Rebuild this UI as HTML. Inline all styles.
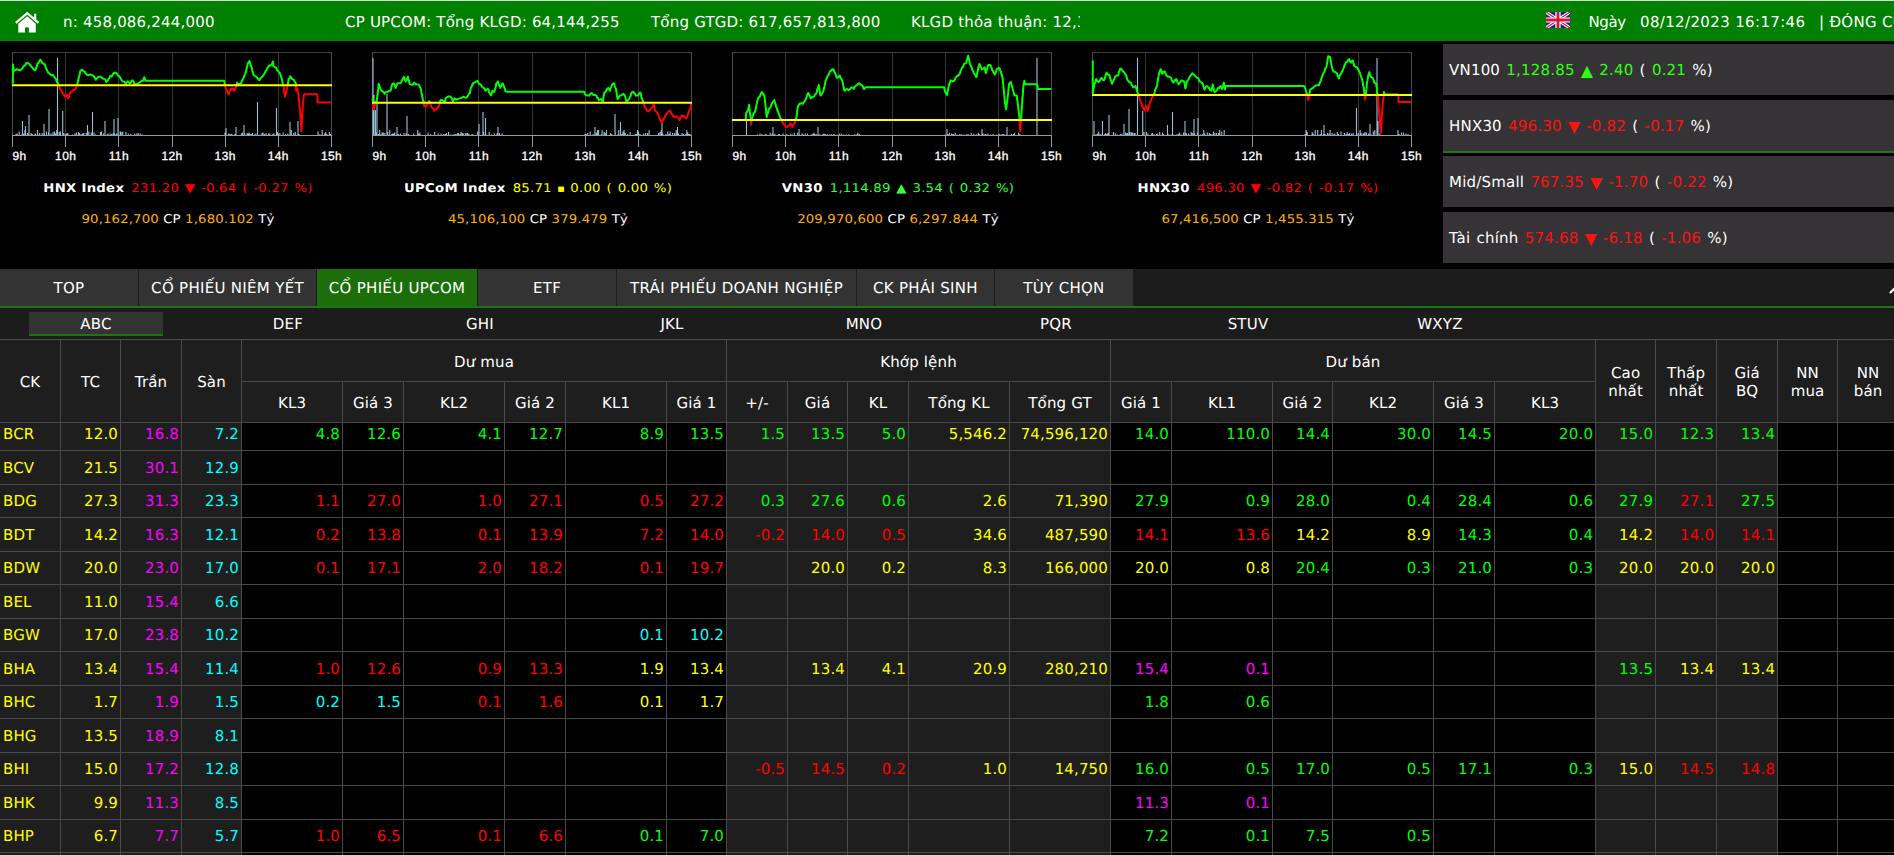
<!DOCTYPE html><html lang="vi"><head><meta charset="utf-8"><title>Bảng giá UPCOM</title><style>
*{box-sizing:border-box}
html,body{margin:0;padding:0;background:#000;overflow:hidden}
body{width:1894px;height:855px;position:relative;font-family:"DejaVu Sans", "Liberation Sans", sans-serif;font-size:15px;color:#fff;text-rendering:geometricPrecision}
#top{position:absolute;left:0;top:0;width:1894px;height:41px;background:#008000;border-top:1px solid #d9d9d9;overflow:hidden;white-space:nowrap}
#top span{position:absolute;top:10px;line-height:22px;height:22px;letter-spacing:.3px}
#mq{position:absolute;left:63px;top:0;width:1017px;height:40px;overflow:hidden}
#mq span{top:10px;letter-spacing:.2px}
.ch{position:absolute;top:0}
.al{font-family:"Liberation Sans",sans-serif;font-size:12px;fill:#fff;letter-spacing:.4px;stroke:#fff;stroke-width:.3px}
.ct1,.ct2{position:absolute;width:356px;text-align:center;font-size:12px;line-height:16px;white-space:nowrap;transform:scaleX(1.105);transform-origin:50% 50%}
.ct1{top:180px}.ct2{top:210.6px;letter-spacing:.13px}
.ct1 b{font-weight:bold;letter-spacing:.25px;margin-right:2.6px}
.ct1 span{letter-spacing:.2px;word-spacing:1.2px}
.ct1 i{font-style:normal;font-size:6.8px;letter-spacing:0;position:relative;top:-1.5px}
.or{color:#ffae0a}
.pn{position:absolute;left:1443px;width:451px;height:51px;background:#353335;padding-left:6px;line-height:53px;white-space:nowrap;letter-spacing:.2px;word-spacing:1.25px}
.pn i{font-style:normal;font-size:15.6px;line-height:0;letter-spacing:0;position:relative;top:.5px}
.pn.a{height:53px;border-bottom:2px solid #1a7a0c}
#tabs{position:absolute;left:0;top:269px;width:1894px;height:37px;background:#1c1c1c}
#tabs div{position:absolute;top:0;height:37px;line-height:39px;text-align:center;background:#333;white-space:nowrap;letter-spacing:.3px}
#tabs div.a{background:#1b6e0a}
#gl{position:absolute;left:0;top:306px;width:1894px;height:2px;background:#1a770c}
#sub{position:absolute;left:0;top:308px;width:1894px;height:31px;background:#1c1c1c}
#sub div{position:absolute;top:4px;width:134px;height:24px;line-height:25px;text-align:center;letter-spacing:.2px}
#sub div.a{background:#333;border-bottom:2px solid #1a770c;line-height:25px}
#tw{position:absolute;left:0;top:339px;width:1894px;height:516px;overflow:hidden}
table.pb{border-collapse:separate;border-spacing:0;table-layout:fixed;border-top:1px solid #4a4a4a}
.pb th{background:#1e1e1e;font-weight:normal;color:#fff;border-right:1px solid #4a4a4a;border-bottom:1px solid #4a4a4a;padding:2px 0 0 0;text-align:center;line-height:18px;letter-spacing:.15px}
.pb tr.h1 th{height:42px}
.pb tr.h2 th{height:41px}
.pb td{border-right:1px solid #4a4a4a;border-bottom:1px solid #4a4a4a;padding:0 2px 0 0;text-align:right;background:#000;white-space:nowrap;overflow:hidden;line-height:18px;letter-spacing:.15px}
.pb td.k{background:#1e1e1e}
.pb td.l{text-align:left;padding:0 0 0 3px}
.pb td .f{margin-top:-6px}
.y{color:#ffff00}.g{color:#00ff00}.r{color:#ff0000}.p{color:#ff00ff}.c{color:#00ffff}
</style></head><body>
<div id="top">
<svg style="position:absolute;left:14px;top:9px" width="26" height="24" viewBox="14 10 26 24"><path d="M15.8 22.9 L27.16 13.2 L38.5 22.9" fill="none" stroke="#fff" stroke-width="2.3"/><path d="M27.16 16.3 L35.8 23.7 V32.6 H28.9 V28.4 Q28.9 27.2 27.7 27.2 H26.2 Q25 27.2 25 28.4 V32.6 H18.3 V23.7 Z" fill="#fff"/><rect x="34.1" y="13.7" width="2.1" height="6" fill="#fff"/></svg>
<div id="mq"><span style="left:0">n: 458,086,244,000</span><span style="left:282px">CP UPCOM: Tổng KLGD: 64,144,255</span><span style="left:588px">Tổng GTGD: 617,657,813,800</span><span style="left:848px">KLGD thỏa thuận: 12,344,211</span></div>
<svg style="position:absolute;left:1546px;top:11px" width="24" height="16" viewBox="0 0 60 40"><rect width="60" height="40" fill="#1b2a7a"/><path d="M0 0L60 40M60 0L0 40" stroke="#fff" stroke-width="8"/><path d="M0 0L60 40M60 0L0 40" stroke="#d8143c" stroke-width="3"/><path d="M30 0V40M0 20H60" stroke="#fff" stroke-width="13"/><path d="M30 0V40M0 20H60" stroke="#d8143c" stroke-width="7"/></svg>
<span style="left:1588.5px;letter-spacing:-.4px">Ngày</span><span style="left:1640px;letter-spacing:.36px">08/12/2023 16:17:46</span><span style="left:1819px">| ĐÓNG CỬA</span>
</div>
<svg class="ch" style="left:0px" width="360" height="170" viewBox="0 0 360 170">
<line x1="12.5" y1="52.5" x2="12.5" y2="135" stroke="#4c4c4c" stroke-width="1"/>
<line x1="12.5" y1="135" x2="12.5" y2="147" stroke="#9a9a9a" stroke-width="1"/>
<line x1="65.5" y1="52.5" x2="65.5" y2="135" stroke="#363636" stroke-width="1"/>
<line x1="65.5" y1="135" x2="65.5" y2="147" stroke="#9a9a9a" stroke-width="1"/>
<line x1="118.5" y1="52.5" x2="118.5" y2="135" stroke="#363636" stroke-width="1"/>
<line x1="118.5" y1="135" x2="118.5" y2="147" stroke="#9a9a9a" stroke-width="1"/>
<line x1="172.5" y1="52.5" x2="172.5" y2="135" stroke="#363636" stroke-width="1"/>
<line x1="172.5" y1="135" x2="172.5" y2="147" stroke="#9a9a9a" stroke-width="1"/>
<line x1="225.5" y1="52.5" x2="225.5" y2="135" stroke="#363636" stroke-width="1"/>
<line x1="225.5" y1="135" x2="225.5" y2="147" stroke="#9a9a9a" stroke-width="1"/>
<line x1="278.5" y1="52.5" x2="278.5" y2="135" stroke="#363636" stroke-width="1"/>
<line x1="278.5" y1="135" x2="278.5" y2="147" stroke="#9a9a9a" stroke-width="1"/>
<line x1="331.5" y1="52.5" x2="331.5" y2="135" stroke="#4c4c4c" stroke-width="1"/>
<line x1="331.5" y1="135" x2="331.5" y2="147" stroke="#9a9a9a" stroke-width="1"/>
<line x1="12" y1="52.5" x2="332" y2="52.5" stroke="#404040" stroke-width="1"/>
<path d="M16.0 135.0V134.0M17.2 135.0V133.5M19.2 135.0V131.5M21.7 135.0V134.4M23.7 135.0V133.5M24.9 135.0V130.0M27.4 135.0V133.0M28.6 135.0V134.0M31.1 135.0V133.0M32.1 135.0V134.0M34.6 135.0V134.4M35.6 135.0V133.5M37.6 135.0V130.0M39.6 135.0V133.0M42.1 135.0V133.0M44.5 135.0V133.0M46.5 135.0V131.5M48.5 135.0V132.5M51.0 135.0V133.5M53.0 135.0V132.0M54.5 135.0V131.5M55.5 135.0V133.5M56.7 135.0V130.0M59.2 135.0V132.0M60.4 135.0V131.5M62.9 135.0V133.5M63.9 135.0V133.0M65.9 135.0V134.0M66.9 135.0V133.0M67.9 135.0V133.5M72.4 135.0V134.4M74.9 135.0V133.5M76.4 135.0V132.5M78.4 135.0V132.0M79.6 135.0V133.0M81.1 135.0V134.0M82.6 135.0V133.5M83.8 135.0V133.0M86.3 135.0V133.0M88.8 135.0V131.5M91.3 135.0V132.5M92.5 135.0V133.5M94.0 135.0V132.5M95.5 135.0V134.4M100.5 135.0V132.0M101.5 135.0V131.5M103.5 135.0V133.5M105.0 135.0V132.0M107.0 135.0V134.4M108.0 135.0V133.5M110.0 135.0V133.5M111.5 135.0V134.0M113.0 135.0V133.5M114.5 135.0V133.5M115.5 135.0V134.4M116.7 135.0V133.5M118.2 135.0V134.0M120.2 135.0V131.5M121.2 135.0V132.0M122.7 135.0V131.5M125.9 135.0V132.0M128.3 135.0V133.5M130.8 135.0V134.0M134.8 135.0V133.5M136.8 135.0V133.5M138.3 135.0V133.0M140.3 135.0V133.5M142.3 135.0V134.4M225.0 135.0V132.5M226.2 135.0V134.4M228.7 135.0V133.5M229.9 135.0V134.0M231.4 135.0V134.0M232.4 135.0V134.4M234.9 135.0V134.0M241.4 135.0V133.5M242.4 135.0V132.5M244.6 135.0V133.5M247.1 135.0V133.0M248.1 135.0V133.5M249.1 135.0V132.5M250.1 135.0V134.0M251.6 135.0V134.0M252.6 135.0V133.0M254.6 135.0V134.4M255.8 135.0V133.5M259.8 135.0V134.4M262.0 135.0V133.0M263.0 135.0V132.5M264.5 135.0V134.0M266.0 135.0V133.0M268.5 135.0V133.5M269.7 135.0V133.5M272.9 135.0V134.0M273.9 135.0V133.5M276.4 135.0V133.0M277.4 135.0V132.0M278.4 135.0V133.5M279.9 135.0V133.0M283.1 135.0V132.5M285.6 135.0V134.0M287.8 135.0V133.5M291.3 135.0V130.0M293.8 135.0V133.0M295.3 135.0V132.0M299.0 135.0V134.0M318.0 135.0V131.5M319.2 135.0V134.4M320.2 135.0V134.4M322.2 135.0V130.0M324.7 135.0V133.5M325.7 135.0V132.0M326.9 135.0V134.0M329.4 135.0V132.0M330.4 135.0V134.0M57.5 135.0V58.0M49.0 135.0V109.0M62.7 135.0V111.0M92.5 135.0V112.0M29.0 135.0V115.0M22.5 135.0V121.0M25.5 135.0V126.0M105.0 135.0V121.0M114.0 135.0V119.0M118.0 135.0V118.0M44.0 135.0V124.0M87.5 135.0V125.0M257.5 135.0V102.0M276.5 135.0V108.0M244.0 135.0V125.0M290.0 135.0V122.0M298.0 135.0V121.0M236.0 135.0V127.0M226.0 135.0V128.0" stroke="#a5d3ef" stroke-width="1.1" fill="none" opacity=".92"/>
<line x1="12" y1="135.5" x2="332" y2="135.5" stroke="#9a9a9a" stroke-width="1"/>
<polyline points="12.8,83.8 12.8,82.2 12.8,81.2 12.9,80.1 12.9,77.4 12.9,76.5 12.9,75.7 13.0,73.5 13.0,72.7 13.0,70.2 13.0,68.4 13.1,68.2 13.1,66.6 13.1,64.5 13.3,66.9 13.5,67.5 13.7,69.4 13.9,70.9 15.4,70.2 16.9,69.2 19.2,70.3 20.4,70.3 21.5,69.1 22.7,68.0 23.6,66.2 24.5,65.5 25.3,65.2 26.2,63.3 27.7,63.0 29.1,63.9 30.1,65.0 31.1,66.2 32.1,67.4 33.5,69.2 35.0,70.3 35.6,69.7 36.2,67.7 36.7,66.8 37.3,64.0 37.9,63.3 38.8,62.6 39.6,60.3 40.5,59.8 41.5,61.6 42.6,63.3 44.9,64.5 45.5,66.9 46.1,68.3 46.7,69.4 47.3,70.9 48.2,72.6 49.2,73.5 50.2,74.4 51.7,75.3 53.1,75.0 54.1,76.5 55.1,77.9 56.0,79.1 56.6,81.3 57.2,82.5 57.8,82.9 58.4,84.6" fill="none" stroke="#00ff00" stroke-width="2" stroke-linejoin="round"/>
<polyline points="58.4,84.6 59.0,86.1 59.7,87.2 60.4,89.6 61.2,90.0 61.9,92.0 62.9,93.6 63.8,94.6 64.8,96.6 65.7,95.4 66.6,94.3 67.1,96.3 67.6,96.9 68.1,98.4 68.6,97.4 69.1,96.1 69.6,93.9 70.1,93.1 71.5,91.8 73.0,90.2 74.5,89.8 75.9,87.9 76.5,86.7 77.1,84.9" fill="none" stroke="#ff0000" stroke-width="2" stroke-linejoin="round"/>
<polyline points="77.1,84.9 77.7,82.6 78.0,80.2 78.3,80.5 78.7,77.3 79.0,77.4 79.4,75.6 79.7,74.3 80.0,72.1 81.2,70.1 82.4,69.7 83.5,71.3 84.7,71.5 85.5,73.4 86.3,74.1 87.0,75.0 88.8,75.2 90.5,74.4 92.9,75.6 93.9,76.2 94.8,77.8 95.8,79.7 97.3,77.8 98.7,76.8 101.1,76.8 102.2,78.2 103.4,78.8 104.6,79.1 105.5,79.9 106.3,82.0 107.3,80.9 108.3,79.6 109.3,77.9 110.4,75.9 111.6,76.4 112.8,74.4 113.9,72.9 115.1,72.7 116.6,73.3 118.0,75.6 119.0,76.2 120.0,77.2 121.0,79.1 122.1,80.8 123.3,81.4 124.5,81.9 125.6,83.8 126.8,82.2 128.0,81.4 129.2,83.0 130.3,83.2 131.5,80.9 132.7,80.3 133.4,81.5 134.2,83.4 135.0,84.3 137.3,84.3 138.8,82.9 140.3,82.0 141.7,80.6 143.2,80.8 143.8,78.8 144.3,77.3 144.9,78.9 145.5,80.8 146.9,80.8 148.4,80.8 149.8,80.8 151.2,80.8 152.6,80.8 154.0,80.8 155.5,80.8 156.9,80.8 158.3,80.8 159.7,80.8 161.2,80.8 162.6,80.8 164.0,80.8 165.4,80.8 166.8,80.8 168.2,80.8 169.6,80.8 171.0,80.8 172.4,80.8 173.8,80.8 175.2,80.8 176.6,80.8 178.0,80.8 179.4,80.8 180.8,80.8 182.2,80.8 183.6,80.8 185.0,80.8 186.4,80.8 187.8,80.8 189.2,80.8 190.6,80.8 192.0,80.8 193.4,80.8 194.8,80.8 196.2,80.8 197.6,80.8 199.0,80.8 200.4,80.8 201.8,80.8 203.2,80.8 204.6,80.8 206.0,80.8 207.4,80.8 208.8,80.8 210.2,80.8 211.6,80.8 213.0,80.8 214.4,80.8 215.8,80.8 217.2,80.8 218.6,80.8 220.0,80.8 221.4,80.8 222.8,80.8 224.2,80.8 224.5,82.1 224.8,84.9" fill="none" stroke="#00ff00" stroke-width="2" stroke-linejoin="round"/>
<polyline points="224.8,84.9 225.4,86.7 226.0,88.6 226.6,90.3 227.2,91.5 227.7,93.1 228.9,94.3 229.5,91.9 230.1,90.5 230.7,89.0 233.0,88.4 234.2,90.8 235.1,89.7 235.9,87.3 237.1,84.9" fill="none" stroke="#ff0000" stroke-width="2" stroke-linejoin="round"/>
<polyline points="237.1,84.9 237.1,82.6 238.8,84.3 241.2,83.2 241.8,81.1 242.4,80.4 242.9,79.1 243.5,77.9 244.1,76.5 244.7,74.5 245.3,73.6 245.9,72.1 246.2,70.8 246.6,69.1 246.9,66.9 247.3,65.4 247.6,63.9 248.5,62.7 249.4,61.0 250.0,62.8 250.5,64.9 251.1,65.6 251.5,67.8 251.9,68.0 252.3,71.1 252.7,71.6 253.1,73.6 253.5,75.0 254.9,75.9 256.4,76.8 257.4,78.2 258.3,79.1 259.3,80.3 260.3,78.3 261.3,77.5 262.2,76.8 263.1,75.7 264.0,74.3 264.9,72.6 265.8,70.9 266.6,70.0 267.5,67.6 268.4,66.7 269.3,65.6 270.7,65.5 272.2,63.9 272.8,61.5 273.0,63.0 273.2,64.0 273.4,66.2 274.8,67.2 276.3,68.0 277.2,70.1 278.0,70.9 278.9,72.2 279.8,73.2 280.3,74.5 280.7,75.7 281.2,76.9 281.7,78.8 282.1,80.3 282.5,82.3 282.9,83.7 283.3,84.9" fill="none" stroke="#00ff00" stroke-width="2" stroke-linejoin="round"/>
<polyline points="283.3,84.9 283.5,85.8 283.7,87.5 283.9,89.6 284.1,91.1 284.3,92.6 284.6,93.6 284.8,94.5 285.1,96.6 285.6,94.5 286.2,93.1 286.5,90.9 286.7,89.7 286.9,88.9 287.2,87.1 287.4,86.1 287.7,84.9" fill="none" stroke="#ff0000" stroke-width="2" stroke-linejoin="round"/>
<polyline points="287.7,84.9 287.9,83.8 288.1,82.0 288.4,81.2 288.6,79.1 289.4,78.4 290.3,76.2 291.2,77.5 292.1,79.1 293.8,79.7 294.7,81.7 295.6,82.6 295.9,84.9" fill="none" stroke="#00ff00" stroke-width="2" stroke-linejoin="round"/>
<polyline points="295.9,84.9 296.0,85.6 296.0,87.9 296.1,90.2 296.2,90.8 297.3,88.4 297.6,89.2 297.8,91.4 298.0,93.0 298.3,94.2 298.5,95.5 298.6,97.6 298.8,97.6 298.9,100.1 299.0,101.3 299.2,103.0 299.3,103.9 299.4,106.4 299.6,106.3 299.7,108.6 299.9,110.5 300.0,111.8 300.1,112.8 300.3,114.2 300.4,115.0 300.5,116.4 300.6,119.1 300.6,119.6 300.7,120.9 300.8,123.3 300.9,124.0 301.0,125.3 301.1,127.5 301.2,128.0 301.3,130.4 301.4,131.1 301.5,129.4 301.6,128.3 301.6,126.9 301.7,125.8 301.8,124.7 301.9,122.9 301.9,120.3 302.0,119.2 302.1,118.5 302.2,116.2 302.2,115.9 302.3,113.6 302.4,112.0 302.5,111.4 302.5,109.2 302.6,108.3 302.7,107.4 302.9,105.0 303.0,104.6 303.1,103.4 303.2,102.0 303.4,99.1 303.5,97.9 303.6,97.2 303.8,95.5 304.4,94.3 305.8,94.3 307.2,94.3 308.6,94.3 310.1,94.3 311.5,94.3 312.9,94.3 314.4,94.3 315.8,94.3 317.2,94.3 317.3,95.3 317.5,97.5 317.6,98.5 317.7,101.6 317.8,102.5 319.3,102.5 320.8,102.5 322.3,102.5 323.8,102.5 325.3,102.5 326.8,102.5 328.3,102.5 329.8,102.5 331.2,102.5" fill="none" stroke="#ff0000" stroke-width="2" stroke-linejoin="round"/>
<line x1="12" y1="85.2" x2="332" y2="85.2" stroke="#ffff00" stroke-width="2"/>
<text x="12.5" y="159.9" class="al" text-anchor="start">9h</text>
<text x="65.7" y="159.9" class="al" text-anchor="middle">10h</text>
<text x="118.8" y="159.9" class="al" text-anchor="middle">11h</text>
<text x="172.0" y="159.9" class="al" text-anchor="middle">12h</text>
<text x="225.2" y="159.9" class="al" text-anchor="middle">13h</text>
<text x="278.3" y="159.9" class="al" text-anchor="middle">14h</text>
<text x="331.5" y="159.9" class="al" text-anchor="middle">15h</text>
</svg>
<div class="ct1" style="left:0px"><b>HNX Index</b> <span style="color:#ff0000">231.20 ▼ -0.64 ( -0.27 %)</span></div>
<div class="ct2" style="left:0px"><span class="or">90,162,700</span> CP <span class="or">1,680.102</span> Tỷ</div>
<svg class="ch" style="left:360px" width="360" height="170" viewBox="0 0 360 170">
<line x1="12.5" y1="52.5" x2="12.5" y2="135" stroke="#4c4c4c" stroke-width="1"/>
<line x1="12.5" y1="135" x2="12.5" y2="147" stroke="#9a9a9a" stroke-width="1"/>
<line x1="65.5" y1="52.5" x2="65.5" y2="135" stroke="#363636" stroke-width="1"/>
<line x1="65.5" y1="135" x2="65.5" y2="147" stroke="#9a9a9a" stroke-width="1"/>
<line x1="118.5" y1="52.5" x2="118.5" y2="135" stroke="#363636" stroke-width="1"/>
<line x1="118.5" y1="135" x2="118.5" y2="147" stroke="#9a9a9a" stroke-width="1"/>
<line x1="172.5" y1="52.5" x2="172.5" y2="135" stroke="#363636" stroke-width="1"/>
<line x1="172.5" y1="135" x2="172.5" y2="147" stroke="#9a9a9a" stroke-width="1"/>
<line x1="225.5" y1="52.5" x2="225.5" y2="135" stroke="#363636" stroke-width="1"/>
<line x1="225.5" y1="135" x2="225.5" y2="147" stroke="#9a9a9a" stroke-width="1"/>
<line x1="278.5" y1="52.5" x2="278.5" y2="135" stroke="#363636" stroke-width="1"/>
<line x1="278.5" y1="135" x2="278.5" y2="147" stroke="#9a9a9a" stroke-width="1"/>
<line x1="331.5" y1="52.5" x2="331.5" y2="135" stroke="#4c4c4c" stroke-width="1"/>
<line x1="331.5" y1="135" x2="331.5" y2="147" stroke="#9a9a9a" stroke-width="1"/>
<line x1="12" y1="52.5" x2="332" y2="52.5" stroke="#404040" stroke-width="1"/>
<path d="M13.0 135.0V134.0M15.5 135.0V134.0M16.5 135.0V132.5M18.5 135.0V134.0M19.7 135.0V130.0M20.9 135.0V134.4M22.1 135.0V132.5M23.3 135.0V132.5M24.8 135.0V133.0M27.8 135.0V132.0M29.8 135.0V130.0M31.8 135.0V134.0M32.8 135.0V133.5M33.8 135.0V133.5M34.8 135.0V132.5M37.3 135.0V134.0M38.5 135.0V134.0M40.5 135.0V133.5M44.0 135.0V133.0M46.0 135.0V133.5M48.5 135.0V134.0M53.7 135.0V133.5M57.7 135.0V130.0M58.7 135.0V133.5M59.9 135.0V132.5M68.1 135.0V132.5M70.6 135.0V134.0M74.6 135.0V132.0M78.1 135.0V133.5M81.1 135.0V133.5M83.8 135.0V134.0M85.3 135.0V134.0M86.5 135.0V133.0M88.5 135.0V132.0M91.0 135.0V134.4M93.0 135.0V134.4M94.2 135.0V134.4M95.2 135.0V134.0M96.4 135.0V134.4M97.4 135.0V133.0M98.4 135.0V133.0M99.9 135.0V134.0M101.1 135.0V132.0M102.3 135.0V133.0M103.3 135.0V133.5M105.3 135.0V133.0M106.8 135.0V133.0M107.8 135.0V133.0M109.0 135.0V134.0M111.5 135.0V134.4M112.7 135.0V134.0M117.7 135.0V131.5M123.7 135.0V132.0M126.2 135.0V134.4M129.2 135.0V132.0M131.7 135.0V134.4M134.4 135.0V133.5M136.9 135.0V133.5M137.9 135.0V133.0M139.4 135.0V133.0M142.1 135.0V133.5M225.0 135.0V134.0M226.2 135.0V134.0M227.7 135.0V133.0M230.2 135.0V131.5M233.2 135.0V134.0M235.2 135.0V134.0M236.4 135.0V132.5M237.6 135.0V130.0M238.6 135.0V130.0M241.1 135.0V134.4M242.1 135.0V130.0M244.1 135.0V132.0M245.3 135.0V133.0M246.5 135.0V130.0M250.5 135.0V133.0M251.7 135.0V134.0M255.2 135.0V132.5M257.7 135.0V134.4M258.7 135.0V130.0M261.9 135.0V134.0M262.9 135.0V131.5M264.1 135.0V130.0M265.3 135.0V133.0M267.7 135.0V134.0M270.2 135.0V132.0M275.2 135.0V134.0M276.4 135.0V134.0M277.4 135.0V130.0M278.6 135.0V131.5M280.1 135.0V134.0M283.6 135.0V133.5M285.6 135.0V133.0M287.6 135.0V133.0M289.1 135.0V130.0M298.6 135.0V133.0M300.1 135.0V132.0M301.3 135.0V130.0M302.8 135.0V133.5M305.8 135.0V134.0M307.8 135.0V131.5M309.0 135.0V134.0M310.2 135.0V131.5M312.7 135.0V133.0M314.7 135.0V133.0M316.2 135.0V130.0M317.4 135.0V132.0M318.6 135.0V133.5M322.1 135.0V133.0M323.6 135.0V134.0M325.8 135.0V134.0M326.8 135.0V130.0M327.8 135.0V132.5M329.0 135.0V134.0M330.0 135.0V134.0M13.0 135.0V58.0M14.0 135.0V95.0M15.5 135.0V110.0M17.0 135.0V97.0M27.0 135.0V94.0M47.0 135.0V116.0M37.0 135.0V127.0M123.0 135.0V112.0M125.5 135.0V118.0M119.0 135.0V124.0M138.0 135.0V127.0M255.0 135.0V114.0M260.5 135.0V122.0M302.0 135.0V123.0M317.5 135.0V127.0M235.0 135.0V127.0" stroke="#a5d3ef" stroke-width="1.1" fill="none" opacity=".92"/>
<line x1="12" y1="135.5" x2="332" y2="135.5" stroke="#9a9a9a" stroke-width="1"/>
<polyline points="12.8,97.8 12.8,98.5 12.8,101.2 12.8,102.5" fill="none" stroke="#00ff00" stroke-width="2" stroke-linejoin="round"/>
<polyline points="12.8,102.5 12.9,103.1 13.0,104.6 13.1,105.9 13.2,108.7 13.4,109.5 13.9,108.0 14.5,106.0 15.1,104.8 15.7,102.5" fill="none" stroke="#ff0000" stroke-width="2" stroke-linejoin="round"/>
<polyline points="15.7,102.5 16.9,100.1 17.1,99.0 17.3,96.1 17.5,95.3 17.7,94.1 17.8,91.6 18.0,90.8 18.2,89.2 18.3,88.1 18.4,86.0 18.5,85.5 18.6,83.8 19.2,85.4 19.8,87.1 20.4,88.7 21.0,89.6 22.1,91.3 23.3,91.5 24.5,93.7 25.9,92.2 27.4,92.0 28.9,90.9 30.3,90.8 30.8,90.0 31.2,88.3 31.6,86.4 32.1,84.3 33.8,83.2 34.4,84.2 35.0,86.2 35.6,87.9 36.4,85.5 37.1,84.0 37.9,83.2 40.3,83.2 41.1,82.3 42.0,80.3 42.9,78.8 43.8,76.8 44.4,77.8 44.9,79.8 45.5,81.4 46.3,80.5 47.1,78.8 47.9,76.8 48.2,78.4 48.6,80.3 48.9,80.4 49.3,82.9 49.6,83.8 51.9,84.9 53.1,84.3 54.3,82.6 55.5,84.3 56.6,84.3 59.0,84.9 59.9,86.7 60.7,88.4 61.0,89.5 61.3,91.7 61.6,93.5 61.9,94.1 62.2,96.4 62.5,97.8 62.9,100.2 63.3,100.5 63.6,102.5" fill="none" stroke="#00ff00" stroke-width="2" stroke-linejoin="round"/>
<polyline points="63.6,102.5 63.9,103.6 64.2,106.0 66.0,106.6 66.9,105.5 67.7,103.7 68.9,102.5" fill="none" stroke="#ff0000" stroke-width="2" stroke-linejoin="round"/>
<polyline points="68.9,102.5 69.3,101.1 69.7,102.5" fill="none" stroke="#00ff00" stroke-width="2" stroke-linejoin="round"/>
<polyline points="69.7,102.5 70.1,103.7 70.7,104.9 71.3,106.3 71.8,107.7 73.0,108.3 74.2,110.7 75.6,109.2 77.1,108.9 78.0,107.0 78.9,106.6 79.3,104.9 79.8,102.5" fill="none" stroke="#ff0000" stroke-width="2" stroke-linejoin="round"/>
<polyline points="79.8,102.5 80.6,100.1 82.4,100.1 83.5,101.2 84.7,102.5 85.1,101.7 85.5,99.2 85.9,97.8 88.2,96.6 90.6,96.6 91.3,97.9 92.1,99.1 92.9,101.3 93.8,99.7 94.6,98.4 96.4,99.6 98.2,98.8 99.9,98.4 101.7,97.8 103.4,96.6 105.8,97.8 106.9,97.2 108.1,95.5 109.0,93.7 109.9,93.1 110.1,90.9 110.4,90.5 110.7,88.3 111.0,87.3 111.8,86.4 112.6,84.2 113.4,83.2 115.7,82.0 117.4,80.8 118.3,82.6 119.2,83.8 120.7,84.4 122.1,86.7 123.3,87.6 124.5,88.7 125.6,90.8 126.8,89.4 128.0,89.0 128.6,90.0 129.1,92.1 129.7,93.7 130.3,94.0 130.9,95.5 131.5,94.0 132.1,91.8 132.6,90.8 134.4,92.0 134.8,89.8 135.1,89.3 135.5,87.8 135.8,86.3 136.2,83.8 137.0,82.7 137.9,81.4 138.5,83.4 139.1,85.0 139.7,86.2 140.3,87.9 141.0,86.6 141.8,85.2 142.6,83.2 143.2,84.9 143.8,85.7 144.4,87.9 144.9,89.1 145.5,91.4 146.7,91.7 148.1,91.7 149.6,91.7 151.0,91.7 152.5,91.7 153.9,91.7 155.3,91.7 156.8,91.7 158.2,91.7 159.7,91.7 161.1,91.7 162.6,91.7 164.0,91.7 165.4,91.7 166.8,91.7 168.2,91.7 169.6,91.7 171.0,91.7 172.4,91.7 173.8,91.7 175.2,91.7 176.6,91.7 178.0,91.7 179.4,91.7 180.8,91.7 182.2,91.7 183.6,91.7 185.0,91.7 186.4,91.7 187.8,91.7 189.2,91.7 190.6,91.7 192.0,91.7 193.4,91.7 194.8,91.7 196.2,91.7 197.6,91.7 199.0,91.7 200.4,91.7 201.8,91.7 203.2,91.7 204.6,91.7 206.0,91.7 207.4,91.7 208.8,91.7 210.2,91.7 211.6,91.7 213.0,91.7 214.4,91.7 215.8,91.7 217.2,91.7 218.6,91.7 220.0,91.7 221.4,91.7 222.8,91.7 224.2,91.7 224.8,93.7 225.4,94.9 227.5,95.5 229.5,95.5 230.7,93.5 231.8,93.1 233.0,94.8 234.2,94.9 236.5,95.5 237.3,97.8 238.1,98.0 238.9,100.1 241.2,99.0 242.1,100.6 243.0,101.9 243.1,99.7 243.3,99.2 243.5,97.1 243.7,95.8 243.9,95.4 244.1,93.1 245.9,91.4 246.6,89.3 247.4,89.4 248.2,87.9 249.1,88.9 250.0,90.8 250.5,88.4 251.1,87.8 251.7,85.3 252.3,84.3 254.1,83.2 254.6,85.7 255.2,87.5 255.8,88.4 256.1,89.6 256.3,91.3 256.6,92.5 256.8,95.2 257.1,96.8 257.3,97.2 257.6,99.0 258.4,97.9 259.1,96.7 259.9,95.5 261.7,95.2 263.4,93.7 264.3,94.8 265.2,96.6 265.6,98.6 266.0,99.3 266.3,101.3 267.8,100.3 269.3,99.0 269.8,97.2 270.4,96.5 271.0,94.2 271.6,92.5 273.4,92.0 274.1,93.2 274.9,93.7 275.7,95.5 278.0,95.5 279.2,93.4 280.4,92.5 280.8,94.3 281.2,96.3 281.7,97.9 282.1,99.0 282.7,100.6 283.3,102.5" fill="none" stroke="#00ff00" stroke-width="2" stroke-linejoin="round"/>
<polyline points="283.3,102.5 283.9,104.9 284.5,106.0 285.2,107.8 286.0,108.7 286.8,110.7 288.3,111.1 289.7,110.1 290.9,109.1 292.1,107.2 292.9,105.8 293.8,104.2 294.1,105.1 294.4,106.9 294.7,109.8 295.0,110.7 296.2,111.6 297.3,113.0 297.9,113.6 298.5,115.6 299.1,117.1 299.7,118.8 300.5,120.5 301.4,122.4 302.2,121.8 303.0,120.0 303.8,118.8 304.5,118.1 305.2,115.4 306.0,115.3 306.7,113.0 308.2,111.8 309.6,110.7 310.4,111.1 311.2,112.9 312.0,114.2 313.1,116.0 314.3,117.1 315.8,116.5 317.2,116.5 318.0,117.9 318.8,118.3 319.6,120.0 320.3,118.1 321.1,117.2 321.9,115.3 324.2,116.5 325.4,118.1 326.6,118.3 327.0,116.5 327.5,115.9 328.0,114.2 328.4,113.2 328.9,111.2 329.8,109.4 330.7,108.9 330.8,106.3 330.9,104.8 331.0,103.7" fill="none" stroke="#ff0000" stroke-width="2" stroke-linejoin="round"/>
<line x1="12" y1="102.7" x2="332" y2="102.7" stroke="#ffff00" stroke-width="2"/>
<text x="12.5" y="159.9" class="al" text-anchor="start">9h</text>
<text x="65.7" y="159.9" class="al" text-anchor="middle">10h</text>
<text x="118.8" y="159.9" class="al" text-anchor="middle">11h</text>
<text x="172.0" y="159.9" class="al" text-anchor="middle">12h</text>
<text x="225.2" y="159.9" class="al" text-anchor="middle">13h</text>
<text x="278.3" y="159.9" class="al" text-anchor="middle">14h</text>
<text x="331.5" y="159.9" class="al" text-anchor="middle">15h</text>
</svg>
<div class="ct1" style="left:360px"><b>UPCoM Index</b> <span style="color:#ffff00">85.71 <i>■</i> 0.00 ( 0.00 %)</span></div>
<div class="ct2" style="left:360px"><span class="or">45,106,100</span> CP <span class="or">379.479</span> Tỷ</div>
<svg class="ch" style="left:720px" width="360" height="170" viewBox="0 0 360 170">
<line x1="12.5" y1="52.5" x2="12.5" y2="135" stroke="#4c4c4c" stroke-width="1"/>
<line x1="12.5" y1="135" x2="12.5" y2="147" stroke="#9a9a9a" stroke-width="1"/>
<line x1="65.5" y1="52.5" x2="65.5" y2="135" stroke="#363636" stroke-width="1"/>
<line x1="65.5" y1="135" x2="65.5" y2="147" stroke="#9a9a9a" stroke-width="1"/>
<line x1="118.5" y1="52.5" x2="118.5" y2="135" stroke="#363636" stroke-width="1"/>
<line x1="118.5" y1="135" x2="118.5" y2="147" stroke="#9a9a9a" stroke-width="1"/>
<line x1="172.5" y1="52.5" x2="172.5" y2="135" stroke="#363636" stroke-width="1"/>
<line x1="172.5" y1="135" x2="172.5" y2="147" stroke="#9a9a9a" stroke-width="1"/>
<line x1="225.5" y1="52.5" x2="225.5" y2="135" stroke="#363636" stroke-width="1"/>
<line x1="225.5" y1="135" x2="225.5" y2="147" stroke="#9a9a9a" stroke-width="1"/>
<line x1="278.5" y1="52.5" x2="278.5" y2="135" stroke="#363636" stroke-width="1"/>
<line x1="278.5" y1="135" x2="278.5" y2="147" stroke="#9a9a9a" stroke-width="1"/>
<line x1="331.5" y1="52.5" x2="331.5" y2="135" stroke="#4c4c4c" stroke-width="1"/>
<line x1="331.5" y1="135" x2="331.5" y2="147" stroke="#9a9a9a" stroke-width="1"/>
<line x1="12" y1="52.5" x2="332" y2="52.5" stroke="#404040" stroke-width="1"/>
<path d="M37.5 135.0V134.6M40.0 135.0V133.4M42.0 135.0V134.1M45.2 135.0V133.7M46.7 135.0V134.3M50.2 135.0V132.8M52.2 135.0V133.4M53.4 135.0V134.6M54.9 135.0V133.7M58.4 135.0V133.9M59.4 135.0V134.1M63.1 135.0V133.4M66.8 135.0V133.9M70.8 135.0V133.7M72.3 135.0V134.6M74.3 135.0V132.8M77.5 135.0V132.8M79.5 135.0V134.6M82.0 135.0V133.4M83.2 135.0V134.6M85.2 135.0V133.4M87.4 135.0V133.4M91.4 135.0V134.6M92.9 135.0V133.7M93.9 135.0V132.8M94.9 135.0V134.1M96.4 135.0V134.3M98.8 135.0V134.6M100.0 135.0V134.6M103.0 135.0V133.9M104.0 135.0V133.4M105.2 135.0V134.1M107.2 135.0V133.9M109.2 135.0V134.6M111.2 135.0V133.9M113.7 135.0V134.1M114.7 135.0V134.6M117.2 135.0V134.6M119.7 135.0V133.4M121.7 135.0V133.7M123.7 135.0V134.6M126.2 135.0V134.6M128.7 135.0V134.3M134.7 135.0V134.3M136.9 135.0V134.3M137.9 135.0V132.8M139.4 135.0V133.9M225.0 135.0V134.6M227.0 135.0V133.4M228.0 135.0V133.9M229.5 135.0V132.8M231.5 135.0V133.4M232.7 135.0V134.1M233.7 135.0V134.3M235.2 135.0V132.8M237.2 135.0V134.6M239.7 135.0V133.9M240.9 135.0V134.6M242.1 135.0V134.6M244.1 135.0V134.6M246.6 135.0V134.3M248.1 135.0V134.1M251.3 135.0V132.8M253.8 135.0V133.7M256.3 135.0V134.3M258.3 135.0V132.8M259.3 135.0V133.9M261.8 135.0V134.6M263.0 135.0V133.4M265.0 135.0V134.1M266.0 135.0V133.9M268.0 135.0V133.4M270.5 135.0V134.6M273.0 135.0V134.1M276.5 135.0V134.6M279.0 135.0V133.4M280.2 135.0V134.6M281.7 135.0V134.6M282.9 135.0V133.9M283.9 135.0V134.3M286.4 135.0V134.6M291.6 135.0V133.7M293.6 135.0V134.1M294.6 135.0V132.8M298.6 135.0V132.8M299.8 135.0V134.1M26.5 135.0V120.0M317.0 135.0V58.0M53.0 135.0V127.0M98.0 135.0V127.0M79.0 135.0V129.0M227.0 135.0V129.0M262.0 135.0V129.0M287.0 135.0V127.0" stroke="#a5d3ef" stroke-width="1.1" fill="none" opacity=".92"/>
<line x1="12" y1="135.5" x2="332" y2="135.5" stroke="#9a9a9a" stroke-width="1"/>
<polyline points="25.6,120.0 25.8,118.1 25.9,116.7 26.0,116.0 26.1,114.0 26.2,113.0 27.1,111.8 28.0,109.5 28.4,108.2 28.8,106.5 29.1,104.8 29.3,106.5 29.5,108.7 29.7,109.3 29.8,111.4 30.0,113.0 30.2,114.0 30.3,115.3 30.6,117.5 30.9,118.3 31.1,120.0" fill="none" stroke="#00ff00" stroke-width="2" stroke-linejoin="round"/>
<polyline points="31.1,120.0 31.1,120.8 31.1,123.1 31.1,124.5 31.3,123.2 31.4,120.8 31.6,120.0" fill="none" stroke="#ff0000" stroke-width="2" stroke-linejoin="round"/>
<polyline points="31.6,120.0 32.1,117.8 32.6,116.5 33.4,114.1 34.2,112.8 35.0,111.8 35.3,110.5 35.6,109.2 36.0,107.9 36.3,106.5 36.6,104.1 36.9,103.2 37.3,101.1 37.6,100.1 37.9,99.0 38.7,97.2 39.5,97.1 40.3,95.5 41.1,93.2 42.0,92.0 42.8,93.2 43.6,94.7 44.4,95.5 44.5,97.3 44.7,98.7 44.9,100.0 45.0,101.8 45.2,102.6 45.4,103.9 45.5,106.0 45.7,107.0 45.9,108.8 46.0,110.0 46.2,112.1 46.4,114.8 46.5,115.2 46.7,117.1 47.1,115.5 47.6,113.4 48.0,112.7 48.4,110.7 49.2,108.6 49.9,107.9 50.6,107.1 51.4,104.8 52.3,102.7 53.3,101.2 54.3,100.1 54.7,101.5 55.2,103.1 55.6,104.5 56.0,106.0 56.5,107.6 57.0,109.2 57.5,110.3 57.9,111.7 58.4,113.0 59.0,114.0 59.6,115.9 60.1,117.4 60.7,118.8 61.9,120.0" fill="none" stroke="#00ff00" stroke-width="2" stroke-linejoin="round"/>
<polyline points="61.9,120.0 62.5,122.2 63.1,123.5 63.9,123.8 64.8,125.9 66.6,127.0 67.7,126.7 68.9,125.3 70.7,123.5 71.5,126.0 72.4,127.0 73.3,124.4 74.2,123.5 74.8,122.8 75.4,120.6" fill="none" stroke="#ff0000" stroke-width="2" stroke-linejoin="round"/>
<polyline points="75.4,120.6 75.8,118.6 76.3,117.7 76.5,117.0 76.7,115.4 76.9,113.9 77.1,112.2 77.3,110.1 77.5,108.8 77.7,107.2 78.5,105.3 79.2,104.2 80.0,103.7 81.5,103.2 83.0,103.7 83.9,102.2 84.9,100.8 85.9,99.0 86.5,97.7 87.0,96.0 87.6,94.0 88.2,93.1 88.8,94.0 89.4,95.2 90.0,96.2 90.5,98.4 92.3,97.1 94.1,96.6 94.8,94.9 95.6,94.2 96.4,93.1 96.8,92.5 97.2,89.7 97.6,88.6 98.0,87.6 98.4,86.3 98.7,84.9 99.0,86.2 99.2,88.3 99.5,89.0 99.7,90.4 100.0,92.2 100.2,94.4 100.5,95.5 101.5,94.3 102.4,93.0 103.4,90.8 103.8,89.4 104.1,88.1 104.4,86.7 104.8,84.6 105.1,83.6 105.4,81.3 105.8,80.3 106.9,77.9 107.7,75.6 108.5,75.0 109.3,73.2 110.1,71.2 111.0,70.9 112.2,69.3 113.4,69.2 113.9,70.4 114.5,72.0 115.1,73.2 115.7,74.5 116.3,76.6 116.9,77.9 118.3,77.2 119.8,75.6 120.6,78.0 121.4,79.1 122.1,80.3 122.5,82.1 122.8,82.7 123.1,85.1 123.5,87.1 123.8,87.3 124.1,89.7 124.5,90.8 125.6,89.7 126.8,89.0 129.1,90.2 130.3,88.7 131.5,87.3 132.7,87.5 133.8,89.0 134.6,87.0 135.4,86.3 136.2,85.5 137.6,84.5 139.1,83.2 140.5,84.7 142.0,85.5 142.8,85.9 143.6,88.7 144.4,89.0 145.5,87.3 146.9,87.3 148.4,87.3 149.8,87.3 151.2,87.3 152.6,87.3 154.0,87.3 155.5,87.3 156.9,87.3 158.3,87.3 159.7,87.3 161.2,87.3 162.6,87.3 164.0,87.3 165.4,87.3 166.8,87.3 168.2,87.3 169.6,87.3 171.0,87.3 172.4,87.3 173.8,87.3 175.2,87.3 176.6,87.3 178.0,87.3 179.4,87.3 180.8,87.3 182.2,87.3 183.6,87.3 185.0,87.3 186.4,87.3 187.8,87.3 189.2,87.3 190.6,87.3 192.0,87.3 193.4,87.3 194.8,87.3 196.2,87.3 197.6,87.3 199.0,87.3 200.4,87.3 201.8,87.3 203.2,87.3 204.6,87.3 206.0,87.3 207.4,87.3 208.8,87.3 210.2,87.3 211.6,87.3 213.0,87.3 214.4,87.3 215.8,87.3 217.2,87.3 218.6,87.3 220.0,87.3 221.4,87.3 222.8,87.3 224.2,87.3 224.6,89.7 225.0,91.1 225.4,92.0 226.3,94.0 227.2,94.9 227.4,92.8 227.7,91.2 227.9,90.8 228.2,89.3 228.4,87.1 228.7,86.4 228.9,84.9 229.5,83.4 230.1,82.2 230.7,80.3 233.0,81.4 233.9,80.9 234.8,79.8 235.6,77.3 236.5,76.8 237.7,75.5 238.9,75.2 240.0,73.2 240.6,70.9 241.2,70.0 241.8,68.2 242.4,67.4 243.2,66.5 244.1,63.9 245.9,63.3 246.3,62.4 246.8,60.8 247.3,59.1 247.7,57.0 248.2,55.7 248.6,57.6 248.9,59.5 249.3,60.3 249.6,63.1 250.0,63.9 250.8,65.8 251.7,67.4 252.3,70.0 252.9,70.7 253.5,72.7 254.4,73.8 255.4,75.5 256.4,77.3 256.7,76.2 257.0,74.3 257.3,72.3 257.6,71.7 257.9,70.7 258.1,68.6 258.5,66.3 258.9,66.3 259.3,63.9 259.9,65.0 260.5,67.3 261.1,67.5 261.7,69.2 263.1,68.9 264.6,67.4 264.9,68.3 265.2,70.4 265.5,72.3 265.8,73.2 266.1,72.4 266.5,69.6 266.9,69.8 267.3,68.5 267.7,66.2 268.1,65.0 270.4,65.0 271.0,67.0 271.6,67.9 272.2,70.0 272.8,70.9 273.5,72.6 274.3,73.7 275.1,74.4 275.7,72.3 276.3,70.8 276.9,69.2 279.2,68.0 279.8,68.9 280.4,71.1 281.0,72.1 281.3,73.8 281.7,74.2 282.0,75.5 282.4,77.5 282.7,79.1 282.9,80.6 283.0,82.2 283.1,83.9 283.3,84.6 283.4,87.1 283.6,88.2 283.7,88.7 283.9,90.8 284.0,92.4 284.1,93.1 284.3,95.5 284.4,97.0 284.5,97.9 284.7,99.6 284.8,101.4 284.9,102.4 285.0,103.7 285.3,104.4 285.6,106.9 285.9,108.0 286.2,109.5 286.4,107.8 286.6,107.2 286.7,104.3 286.9,103.4 287.1,101.8 287.2,100.9 287.4,99.0 287.6,98.3 287.7,96.8 287.9,95.2 288.1,93.7 288.3,91.4 288.4,90.0 288.6,88.2 288.8,87.3 289.0,84.8 289.1,83.8 290.9,82.0 291.3,83.6 291.8,85.9 292.2,87.0 292.6,88.4 293.0,90.4 293.4,91.2 293.7,92.9 294.1,94.0 294.4,95.5 296.8,95.5 296.9,97.0 297.1,99.4 297.3,99.7 297.5,101.4 297.7,103.2 297.9,104.8 298.1,105.5 298.3,107.9 298.5,110.1 298.7,111.2 298.9,113.1 299.1,114.2 299.2,115.4 299.4,117.0 299.5,118.6 299.7,120.0" fill="none" stroke="#00ff00" stroke-width="2" stroke-linejoin="round"/>
<polyline points="299.7,120.0 299.8,120.7 299.8,123.5 299.9,124.6 300.0,126.1 300.1,128.3 300.2,130.3 300.3,131.1 300.4,129.2 300.5,127.1 300.6,125.9 300.7,124.6 300.8,122.5 301.0,121.6 301.1,120.0" fill="none" stroke="#ff0000" stroke-width="2" stroke-linejoin="round"/>
<polyline points="301.1,120.0 301.2,118.7 301.3,117.1 301.4,115.1 301.5,113.8 301.5,111.6 301.6,110.6 301.7,109.5 301.8,108.1 301.9,106.0 302.0,104.8 302.1,103.5 302.2,101.8 302.3,99.6 302.4,98.7 302.5,96.8 302.6,96.7 302.8,95.2 302.9,93.5 303.0,92.2 303.1,89.8 303.2,88.4 303.4,86.5 303.6,85.2 303.9,83.2 304.1,82.4 304.3,80.8 304.6,81.7 304.9,84.3 306.5,84.3 308.0,84.3 309.5,84.3 311.1,84.3 312.6,84.3 314.2,84.3 315.7,84.3 317.2,84.3 317.4,86.1 317.6,86.9 317.8,89.0 319.3,89.0 320.8,89.0 322.3,89.0 323.8,89.0 325.3,89.0 326.8,89.0 328.3,89.0 329.8,89.0 331.2,89.0" fill="none" stroke="#00ff00" stroke-width="2" stroke-linejoin="round"/>
<line x1="12" y1="120.0" x2="332" y2="120.0" stroke="#ffff00" stroke-width="2"/>
<text x="12.5" y="159.9" class="al" text-anchor="start">9h</text>
<text x="65.7" y="159.9" class="al" text-anchor="middle">10h</text>
<text x="118.8" y="159.9" class="al" text-anchor="middle">11h</text>
<text x="172.0" y="159.9" class="al" text-anchor="middle">12h</text>
<text x="225.2" y="159.9" class="al" text-anchor="middle">13h</text>
<text x="278.3" y="159.9" class="al" text-anchor="middle">14h</text>
<text x="331.5" y="159.9" class="al" text-anchor="middle">15h</text>
</svg>
<div class="ct1" style="left:720px"><b>VN30</b> <span style="color:#33ff33">1,114.89 ▲ 3.54 ( 0.32 %)</span></div>
<div class="ct2" style="left:720px"><span class="or">209,970,600</span> CP <span class="or">6,297.844</span> Tỷ</div>
<svg class="ch" style="left:1080px" width="360" height="170" viewBox="0 0 360 170">
<line x1="12.5" y1="52.5" x2="12.5" y2="135" stroke="#4c4c4c" stroke-width="1"/>
<line x1="12.5" y1="135" x2="12.5" y2="147" stroke="#9a9a9a" stroke-width="1"/>
<line x1="65.5" y1="52.5" x2="65.5" y2="135" stroke="#363636" stroke-width="1"/>
<line x1="65.5" y1="135" x2="65.5" y2="147" stroke="#9a9a9a" stroke-width="1"/>
<line x1="118.5" y1="52.5" x2="118.5" y2="135" stroke="#363636" stroke-width="1"/>
<line x1="118.5" y1="135" x2="118.5" y2="147" stroke="#9a9a9a" stroke-width="1"/>
<line x1="172.5" y1="52.5" x2="172.5" y2="135" stroke="#363636" stroke-width="1"/>
<line x1="172.5" y1="135" x2="172.5" y2="147" stroke="#9a9a9a" stroke-width="1"/>
<line x1="225.5" y1="52.5" x2="225.5" y2="135" stroke="#363636" stroke-width="1"/>
<line x1="225.5" y1="135" x2="225.5" y2="147" stroke="#9a9a9a" stroke-width="1"/>
<line x1="278.5" y1="52.5" x2="278.5" y2="135" stroke="#363636" stroke-width="1"/>
<line x1="278.5" y1="135" x2="278.5" y2="147" stroke="#9a9a9a" stroke-width="1"/>
<line x1="331.5" y1="52.5" x2="331.5" y2="135" stroke="#4c4c4c" stroke-width="1"/>
<line x1="331.5" y1="135" x2="331.5" y2="147" stroke="#9a9a9a" stroke-width="1"/>
<line x1="12" y1="52.5" x2="332" y2="52.5" stroke="#404040" stroke-width="1"/>
<path d="M16.0 135.0V134.0M17.5 135.0V133.5M18.7 135.0V131.5M20.2 135.0V134.0M22.2 135.0V133.0M24.7 135.0V134.0M25.7 135.0V133.0M26.9 135.0V134.0M27.9 135.0V133.0M33.4 135.0V132.0M35.4 135.0V133.0M37.4 135.0V134.4M40.4 135.0V134.0M41.9 135.0V133.5M45.6 135.0V132.5M46.6 135.0V133.5M47.6 135.0V133.0M50.1 135.0V132.0M51.6 135.0V132.5M52.6 135.0V132.5M54.1 135.0V133.0M55.1 135.0V133.0M62.8 135.0V134.0M64.0 135.0V132.0M66.5 135.0V132.0M68.0 135.0V133.5M71.5 135.0V133.5M72.5 135.0V133.0M74.0 135.0V134.0M76.5 135.0V134.0M77.7 135.0V133.5M79.7 135.0V132.0M82.4 135.0V132.5M83.6 135.0V134.0M87.6 135.0V134.0M88.6 135.0V134.4M91.1 135.0V134.4M94.1 135.0V134.4M97.1 135.0V134.0M98.6 135.0V134.0M99.6 135.0V132.5M101.1 135.0V134.4M103.6 135.0V132.5M105.6 135.0V133.0M106.6 135.0V133.5M108.6 135.0V133.5M111.1 135.0V132.0M112.3 135.0V133.0M113.8 135.0V131.5M114.8 135.0V133.5M117.3 135.0V132.5M120.3 135.0V134.4M122.3 135.0V134.0M123.8 135.0V130.0M124.8 135.0V133.5M127.3 135.0V132.5M129.3 135.0V133.0M130.5 135.0V134.0M132.0 135.0V134.0M133.5 135.0V131.5M135.0 135.0V133.0M136.5 135.0V133.0M138.5 135.0V133.0M139.7 135.0V130.0M141.7 135.0V131.5M144.2 135.0V130.0M225.0 135.0V134.0M226.2 135.0V130.0M227.2 135.0V132.0M232.2 135.0V132.0M233.2 135.0V133.5M235.2 135.0V130.0M237.7 135.0V130.0M240.2 135.0V134.0M241.4 135.0V130.0M243.4 135.0V134.0M244.9 135.0V134.0M247.4 135.0V133.0M248.9 135.0V133.5M250.1 135.0V130.0M252.1 135.0V133.0M253.6 135.0V134.4M254.8 135.0V133.5M257.3 135.0V132.0M258.5 135.0V134.0M261.0 135.0V131.5M264.5 135.0V133.0M266.0 135.0V134.0M267.2 135.0V132.0M268.4 135.0V134.0M269.6 135.0V133.0M271.6 135.0V133.5M273.1 135.0V133.0M276.6 135.0V134.0M278.1 135.0V133.0M280.1 135.0V130.0M281.1 135.0V133.0M283.1 135.0V133.5M284.1 135.0V133.5M285.1 135.0V132.0M286.6 135.0V132.5M288.6 135.0V133.5M289.8 135.0V134.0M291.3 135.0V134.4M293.3 135.0V131.5M294.8 135.0V130.0M297.3 135.0V133.0M299.8 135.0V133.5M318.0 135.0V130.0M319.0 135.0V134.0M321.5 135.0V132.5M323.5 135.0V132.5M326.0 135.0V133.5M328.0 135.0V134.0M57.5 135.0V58.0M297.0 135.0V58.0M49.0 135.0V109.0M62.7 135.0V111.0M92.5 135.0V112.0M29.0 135.0V115.0M22.5 135.0V121.0M14.0 135.0V121.0M105.0 135.0V121.0M114.0 135.0V119.0M118.0 135.0V118.0M44.0 135.0V124.0M87.5 135.0V125.0M276.5 135.0V108.0M298.0 135.0V121.0M244.0 135.0V125.0M290.0 135.0V124.0" stroke="#a5d3ef" stroke-width="1.1" fill="none" opacity=".92"/>
<line x1="12" y1="135.5" x2="332" y2="135.5" stroke="#9a9a9a" stroke-width="1"/>
<polyline points="12.8,60.4 12.8,62.7 12.8,63.0 12.8,64.9 12.8,65.8 12.8,68.0 12.8,69.4 12.8,69.8 12.8,71.2 12.8,73.0 12.8,75.6 12.8,76.7 12.8,77.6 12.8,79.1 12.8,80.1 12.8,82.1 12.8,83.5 12.8,84.8 12.8,86.0 12.8,88.6 12.8,90.0 12.8,91.1 12.8,91.4 12.8,93.7 13.0,91.7 13.3,91.0 13.5,88.9 13.8,87.6 14.0,87.4 14.3,84.6 14.5,83.8 15.1,82.9 15.7,80.2 16.3,79.1 17.4,81.4 18.6,82.0 19.6,81.1 20.6,78.9 21.5,77.9 22.7,79.6 23.9,80.3 24.5,79.3 25.1,77.6 25.6,75.4 26.2,73.5 26.8,72.7 28.0,74.7 29.2,75.0 29.6,75.8 30.1,77.9 30.6,79.4 31.1,80.9 31.6,81.9 32.1,83.8 32.7,81.6 33.2,81.5 33.8,79.7 34.4,79.1 35.0,76.8 36.5,75.7 37.9,75.6 38.4,75.0 38.9,72.0 39.5,70.8 40.0,69.4 40.5,68.6 41.8,69.8 43.2,71.5 44.3,72.4 45.5,74.4 46.1,75.3 46.7,77.4 47.3,79.5 47.9,80.3 49.3,82.2 50.8,82.6 51.6,84.9 52.3,85.6 53.1,87.3 55.5,86.1 55.9,87.1 56.4,88.8 56.9,90.7 57.3,92.0 57.8,93.1 58.7,95.1" fill="none" stroke="#00ff00" stroke-width="2" stroke-linejoin="round"/>
<polyline points="58.7,95.1 59.2,96.2 59.6,99.0 60.1,99.9 60.7,102.2 61.3,103.3 61.9,104.8 62.5,107.1 63.1,107.2 63.6,108.7 64.2,110.7 64.8,109.0 65.4,108.0 66.0,106.0 66.6,107.6 67.2,109.6 67.7,110.7 68.1,110.0 68.4,107.5 68.8,107.2 69.1,105.8 69.5,103.7 70.1,101.7 70.7,101.2 71.3,99.6 71.8,97.8 72.7,96.7 73.6,95.1" fill="none" stroke="#ff0000" stroke-width="2" stroke-linejoin="round"/>
<polyline points="73.6,95.1 74.2,94.1 74.8,92.0 75.2,89.8 75.7,88.9 76.2,87.4 76.6,87.2 77.1,84.9 77.3,83.6 77.6,81.1 77.8,81.1 78.1,78.3 78.3,77.3 78.6,76.2 78.8,74.4 79.4,72.4 80.0,71.0 80.6,69.2 81.2,70.1 81.8,73.2 82.4,73.8 83.5,71.8 84.7,71.5 85.5,73.2 86.3,75.5 87.0,76.2 88.8,76.6 90.5,77.3 91.3,78.5 92.0,80.5 92.7,81.9 93.5,82.6 94.4,81.1 95.4,79.7 96.4,79.1 97.0,81.0 97.6,82.2 98.2,83.3 98.7,84.3 99.7,82.7 100.7,81.7 101.7,80.3 104.0,81.4 104.3,82.0 104.6,83.8 104.9,85.5 105.2,87.8 105.5,88.4 105.8,87.7 106.1,85.3 106.4,84.6 106.6,83.0 106.9,81.4 107.7,80.5 108.5,79.5 109.3,77.9 110.2,76.1 111.2,74.7 112.2,73.2 113.4,74.3 114.5,75.0 116.0,77.0 117.5,77.9 118.4,78.4 119.4,81.2 120.4,81.4 121.5,82.5 122.7,83.8 123.2,85.0 123.6,86.7 124.0,88.0 124.5,89.6 125.2,87.9 126.0,86.4 126.8,86.1 128.0,86.8 129.2,88.4 130.3,90.1 131.5,90.8 131.8,88.9 132.1,87.6 132.4,86.6 132.7,84.3 133.0,86.1 133.4,87.6 133.7,88.6 134.1,90.8 134.4,92.0 135.9,91.4 137.3,89.6 138.3,87.8 139.3,88.1 140.3,86.1 141.1,87.5 142.0,89.0 142.5,86.7 142.9,86.5 143.3,84.7 143.8,82.6 144.0,84.5 144.2,86.0 144.5,87.3 144.7,88.7 144.9,89.6 145.2,87.5 145.5,85.9 146.9,85.9 148.4,85.9 149.8,85.9 151.2,85.9 152.6,85.9 154.0,85.9 155.5,85.9 156.9,85.9 158.3,85.9 159.7,85.9 161.2,85.9 162.6,85.9 164.0,85.9 165.4,85.9 166.8,85.9 168.2,85.9 169.6,85.9 171.0,85.9 172.4,85.9 173.8,85.9 175.2,85.9 176.6,85.9 178.0,85.9 179.4,85.9 180.8,85.9 182.2,85.9 183.6,85.9 185.0,85.9 186.4,85.9 187.8,85.9 189.2,85.9 190.6,85.9 192.0,85.9 193.4,85.9 194.8,85.9 196.2,85.9 197.6,85.9 199.0,85.9 200.4,85.9 201.8,85.9 203.2,85.9 204.6,85.9 206.0,85.9 207.4,85.9 208.8,85.9 210.2,85.9 211.6,85.9 213.0,85.9 214.4,85.9 215.8,85.9 217.2,85.9 218.6,85.9 220.0,85.9 221.4,85.9 222.8,85.9 224.2,85.9 224.8,87.4 225.4,88.4 225.8,90.7 226.3,92.0 226.7,93.4 227.2,94.3 227.7,95.1" fill="none" stroke="#00ff00" stroke-width="2" stroke-linejoin="round"/>
<polyline points="227.7,95.1 227.9,97.6 228.1,98.2 228.3,99.9 228.6,99.2 229.0,96.3 229.3,95.1" fill="none" stroke="#ff0000" stroke-width="2" stroke-linejoin="round"/>
<polyline points="229.3,95.1 229.5,92.5 229.8,92.3 230.1,89.6 231.5,88.8 233.0,87.9 234.5,86.4 235.9,85.5 237.4,85.1 238.8,85.5 239.4,83.4 240.0,82.3 240.6,81.1 241.2,79.1 241.8,77.2 242.4,76.0 242.9,74.3 243.5,72.9 244.1,72.1 244.7,71.4 245.3,68.3 245.9,68.0 246.5,66.2 246.7,65.4 247.0,63.5 247.2,62.2 247.5,60.7 247.7,58.6 248.0,57.4 248.2,56.3 250.0,56.9 250.3,58.1 250.5,59.4 250.8,61.6 251.1,62.5 251.4,64.3 251.7,66.2 252.3,68.6 252.9,70.3 253.5,71.5 254.9,72.0 256.4,72.7 257.0,73.6 257.6,75.5 258.2,76.9 258.7,78.5 259.3,76.6 259.9,75.3 260.5,74.9 261.1,73.2 261.7,72.1 262.2,71.3 262.8,70.0 263.4,68.5 264.0,67.2 264.6,65.0 265.6,63.3 266.5,61.8 267.5,61.5 268.4,59.7 269.3,59.2 270.1,61.7 271.0,62.7 271.9,61.1 272.8,60.4 273.2,62.4 273.7,63.8 274.1,65.6 274.5,66.2 276.9,67.4 277.6,69.1 278.3,69.3 279.1,71.1 279.8,72.7 280.4,74.5 281.0,76.1 281.5,77.8 282.1,79.1 282.4,81.2 282.7,81.6 283.0,84.5 283.3,86.0 283.6,86.8 283.9,88.4 284.0,90.2 284.2,91.1 284.3,93.1 284.5,95.1" fill="none" stroke="#00ff00" stroke-width="2" stroke-linejoin="round"/>
<polyline points="284.5,95.1 284.8,96.5 285.0,99.2 285.5,97.2 285.9,95.1" fill="none" stroke="#ff0000" stroke-width="2" stroke-linejoin="round"/>
<polyline points="285.9,95.1 286.0,94.5 286.1,92.6 286.3,90.1 286.4,88.5 286.5,88.5 286.7,86.1 286.8,84.9 287.0,82.7 287.3,81.6 287.5,80.4 287.7,79.0 288.0,76.8 288.4,75.1 288.9,73.9 289.4,72.1 289.9,74.1 290.4,75.6 290.9,76.8 292.7,77.9 293.2,79.0 293.8,80.6 294.4,82.6 296.2,83.8 296.4,86.1 296.5,86.7 296.7,87.6 296.9,89.2 297.1,91.7 297.3,93.1 297.9,95.1" fill="none" stroke="#00ff00" stroke-width="2" stroke-linejoin="round"/>
<polyline points="297.9,95.1 298.0,96.4 298.1,98.2 298.2,100.6 298.3,101.6 298.4,102.4 298.5,104.8 298.6,105.8 298.7,107.8 298.9,108.8 299.0,110.5 299.1,111.8 299.2,114.2 299.3,114.9 299.4,117.7 299.6,118.4 299.7,120.0 299.8,121.1 299.9,122.3 300.1,123.6 300.2,126.3 300.3,127.6 300.5,127.9 300.6,129.7 300.7,132.3 300.8,132.9 300.9,131.1 301.0,130.3 301.1,128.9 301.2,127.5 301.3,125.4 301.4,124.9 301.5,123.5 301.6,120.6 301.6,119.5 301.7,117.8 301.8,117.3 301.9,116.2 302.0,114.2 302.1,111.8 302.2,111.7 302.4,109.7 302.5,107.8 302.6,106.4 302.7,105.4 302.8,103.2 302.9,101.3 303.1,101.3 303.2,99.0 303.5,97.9 303.8,95.1" fill="none" stroke="#ff0000" stroke-width="2" stroke-linejoin="round"/>
<polyline points="303.8,95.1 303.9,93.7 304.0,92.0 304.9,94.5 306.4,94.5 307.9,94.5 309.4,94.5 310.9,94.5 312.4,94.5 313.9,94.5 315.4,94.5 316.9,94.5 318.4,94.5" fill="none" stroke="#00ff00" stroke-width="2" stroke-linejoin="round"/>
<polyline points="318.4,95.1 318.4,96.4 318.4,98.0 318.4,99.8 318.4,101.9 319.8,101.9 321.2,101.9 322.7,101.9 324.1,101.9 325.5,101.9 327.0,101.9 328.4,101.9 329.8,101.9 331.2,101.9" fill="none" stroke="#ff0000" stroke-width="2" stroke-linejoin="round"/>
<line x1="12" y1="95.1" x2="332" y2="95.1" stroke="#ffff00" stroke-width="2"/>
<text x="12.5" y="159.9" class="al" text-anchor="start">9h</text>
<text x="65.7" y="159.9" class="al" text-anchor="middle">10h</text>
<text x="118.8" y="159.9" class="al" text-anchor="middle">11h</text>
<text x="172.0" y="159.9" class="al" text-anchor="middle">12h</text>
<text x="225.2" y="159.9" class="al" text-anchor="middle">13h</text>
<text x="278.3" y="159.9" class="al" text-anchor="middle">14h</text>
<text x="331.5" y="159.9" class="al" text-anchor="middle">15h</text>
</svg>
<div class="ct1" style="left:1080px"><b>HNX30</b> <span style="color:#ff0000">496.30 ▼ -0.82 ( -0.17 %)</span></div>
<div class="ct2" style="left:1080px"><span class="or">67,416,500</span> CP <span class="or">1,455.315</span> Tỷ</div>
<div class="pn" style="top:44px">VN100 <span style="color:#33ff11">1,128.85 <i>▲</i> 2.40</span> ( <span style="color:#33ff11">0.21</span> %)</div>
<div class="pn a" style="top:100px">HNX30 <span style="color:#ff1111">496.30 <i>▼</i> -0.82</span> ( <span style="color:#ff1111">-0.17</span> %)</div>
<div class="pn" style="top:156px">Mid/Small <span style="color:#ff1111">767.35 <i>▼</i> -1.70</span> ( <span style="color:#ff1111">-0.22</span> %)</div>
<div class="pn" style="top:212px">Tài chính <span style="color:#ff1111">574.68 <i>▼</i> -6.18</span> ( <span style="color:#ff1111">-1.06</span> %)</div>
<div id="tabs">
<div style="left:0px;width:137.5px;padding-left:0.5px">TOP</div>
<div style="left:139px;width:176.5px;padding-left:0.5px">CỔ PHIẾU NIÊM YẾT</div>
<div class="a" style="left:317px;width:159.5px;padding-left:0.5px">CỔ PHIẾU UPCOM</div>
<div style="left:478px;width:137.5px;padding-left:0.5px">ETF</div>
<div style="left:617px;width:238.5px;padding-left:0.5px">TRÁI PHIẾU DOANH NGHIỆP</div>
<div style="left:857px;width:136.5px;padding-left:0.5px">CK PHÁI SINH</div>
<div style="left:995px;width:137.5px;padding-left:0.5px">TÙY CHỌN</div>
<svg style="position:absolute;left:1887.5px;top:14px" width="8" height="12" viewBox="0 0 8 12"><path d="M2.5 9.5L8 4" stroke="#fff" stroke-width="2" stroke-linecap="round"/></svg>
</div><div id="gl"></div><div id="sub">
<div class="a" style="left:29px">ABC</div>
<div style="left:221px">DEF</div>
<div style="left:413px">GHI</div>
<div style="left:605px">JKL</div>
<div style="left:797px">MNO</div>
<div style="left:989px">PQR</div>
<div style="left:1181px">STUV</div>
<div style="left:1373px">WXYZ</div>
</div>
<div id="tw"><table class="pb" style="width:1899px"><colgroup>
<col style="width:61px">
<col style="width:60px">
<col style="width:61px">
<col style="width:60px">
<col style="width:101px">
<col style="width:61px">
<col style="width:101px">
<col style="width:61px">
<col style="width:101px">
<col style="width:60px">
<col style="width:61px">
<col style="width:60px">
<col style="width:61px">
<col style="width:101px">
<col style="width:101px">
<col style="width:61px">
<col style="width:101px">
<col style="width:60px">
<col style="width:101px">
<col style="width:61px">
<col style="width:101px">
<col style="width:60px">
<col style="width:61px">
<col style="width:61px">
<col style="width:60px">
<col style="width:61px">
</colgroup>
<thead><tr class="h1">
<th rowspan="2">CK</th>
<th rowspan="2">TC</th>
<th rowspan="2">Trần</th>
<th rowspan="2">Sàn</th>
<th colspan="6">Dư mua</th><th colspan="5">Khớp lệnh</th><th colspan="6">Dư bán</th>
<th rowspan="2" class="two">Cao<br>nhất</th>
<th rowspan="2" class="two">Thấp<br>nhất</th>
<th rowspan="2" class="two">Giá<br>BQ</th>
<th rowspan="2" class="two">NN<br>mua</th>
<th rowspan="2" class="two">NN<br>bán</th>
</tr><tr class="h2">
<th>KL3</th>
<th>Giá 3</th>
<th>KL2</th>
<th>Giá 2</th>
<th>KL1</th>
<th>Giá 1</th>
<th>+/-</th>
<th>Giá</th>
<th>KL</th>
<th>Tổng KL</th>
<th>Tổng GT</th>
<th>Giá 1</th>
<th>KL1</th>
<th>Giá 2</th>
<th>KL2</th>
<th>Giá 3</th>
<th>KL3</th>
</tr></thead><tbody>
<tr style="height:28px">
<td class="k y l"><div class="f">BCR</div></td>
<td class="k y"><div class="f">12.0</div></td>
<td class="k p"><div class="f">16.8</div></td>
<td class="k c"><div class="f">7.2</div></td>
<td class="g"><div class="f">4.8</div></td>
<td class="g"><div class="f">12.6</div></td>
<td class="g"><div class="f">4.1</div></td>
<td class="g"><div class="f">12.7</div></td>
<td class="g"><div class="f">8.9</div></td>
<td class="g"><div class="f">13.5</div></td>
<td class="k g"><div class="f">1.5</div></td>
<td class="k g"><div class="f">13.5</div></td>
<td class="k g"><div class="f">5.0</div></td>
<td class="k y"><div class="f">5,546.2</div></td>
<td class="k y"><div class="f">74,596,120</div></td>
<td class="g"><div class="f">14.0</div></td>
<td class="g"><div class="f">110.0</div></td>
<td class="g"><div class="f">14.4</div></td>
<td class="g"><div class="f">30.0</div></td>
<td class="g"><div class="f">14.5</div></td>
<td class="g"><div class="f">20.0</div></td>
<td class="k g"><div class="f">15.0</div></td>
<td class="k g"><div class="f">12.3</div></td>
<td class="k g"><div class="f">13.4</div></td>
<td><div class="f"></div></td>
<td><div class="f"></div></td>
</tr>
<tr style="height:34px">
<td class="k y l">BCV</td>
<td class="k y">21.5</td>
<td class="k p">30.1</td>
<td class="k c">12.9</td>
<td></td>
<td></td>
<td></td>
<td></td>
<td></td>
<td></td>
<td class="k"></td>
<td class="k"></td>
<td class="k"></td>
<td class="k"></td>
<td class="k"></td>
<td></td>
<td></td>
<td></td>
<td></td>
<td></td>
<td></td>
<td class="k"></td>
<td class="k"></td>
<td class="k"></td>
<td></td>
<td></td>
</tr>
<tr style="height:33px">
<td class="k y l">BDG</td>
<td class="k y">27.3</td>
<td class="k p">31.3</td>
<td class="k c">23.3</td>
<td class="r">1.1</td>
<td class="r">27.0</td>
<td class="r">1.0</td>
<td class="r">27.1</td>
<td class="r">0.5</td>
<td class="r">27.2</td>
<td class="k g">0.3</td>
<td class="k g">27.6</td>
<td class="k g">0.6</td>
<td class="k y">2.6</td>
<td class="k y">71,390</td>
<td class="g">27.9</td>
<td class="g">0.9</td>
<td class="g">28.0</td>
<td class="g">0.4</td>
<td class="g">28.4</td>
<td class="g">0.6</td>
<td class="k g">27.9</td>
<td class="k r">27.1</td>
<td class="k g">27.5</td>
<td></td>
<td></td>
</tr>
<tr style="height:34px">
<td class="k y l">BDT</td>
<td class="k y">14.2</td>
<td class="k p">16.3</td>
<td class="k c">12.1</td>
<td class="r">0.2</td>
<td class="r">13.8</td>
<td class="r">0.1</td>
<td class="r">13.9</td>
<td class="r">7.2</td>
<td class="r">14.0</td>
<td class="k r">-0.2</td>
<td class="k r">14.0</td>
<td class="k r">0.5</td>
<td class="k y">34.6</td>
<td class="k y">487,590</td>
<td class="r">14.1</td>
<td class="r">13.6</td>
<td class="y">14.2</td>
<td class="y">8.9</td>
<td class="g">14.3</td>
<td class="g">0.4</td>
<td class="k y">14.2</td>
<td class="k r">14.0</td>
<td class="k r">14.1</td>
<td></td>
<td></td>
</tr>
<tr style="height:33px">
<td class="k y l">BDW</td>
<td class="k y">20.0</td>
<td class="k p">23.0</td>
<td class="k c">17.0</td>
<td class="r">0.1</td>
<td class="r">17.1</td>
<td class="r">2.0</td>
<td class="r">18.2</td>
<td class="r">0.1</td>
<td class="r">19.7</td>
<td class="k"></td>
<td class="k y">20.0</td>
<td class="k y">0.2</td>
<td class="k y">8.3</td>
<td class="k y">166,000</td>
<td class="y">20.0</td>
<td class="y">0.8</td>
<td class="g">20.4</td>
<td class="g">0.3</td>
<td class="g">21.0</td>
<td class="g">0.3</td>
<td class="k y">20.0</td>
<td class="k y">20.0</td>
<td class="k y">20.0</td>
<td></td>
<td></td>
</tr>
<tr style="height:34px">
<td class="k y l">BEL</td>
<td class="k y">11.0</td>
<td class="k p">15.4</td>
<td class="k c">6.6</td>
<td></td>
<td></td>
<td></td>
<td></td>
<td></td>
<td></td>
<td class="k"></td>
<td class="k"></td>
<td class="k"></td>
<td class="k"></td>
<td class="k"></td>
<td></td>
<td></td>
<td></td>
<td></td>
<td></td>
<td></td>
<td class="k"></td>
<td class="k"></td>
<td class="k"></td>
<td></td>
<td></td>
</tr>
<tr style="height:33px">
<td class="k y l">BGW</td>
<td class="k y">17.0</td>
<td class="k p">23.8</td>
<td class="k c">10.2</td>
<td></td>
<td></td>
<td></td>
<td></td>
<td class="c">0.1</td>
<td class="c">10.2</td>
<td class="k"></td>
<td class="k"></td>
<td class="k"></td>
<td class="k"></td>
<td class="k"></td>
<td></td>
<td></td>
<td></td>
<td></td>
<td></td>
<td></td>
<td class="k"></td>
<td class="k"></td>
<td class="k"></td>
<td></td>
<td></td>
</tr>
<tr style="height:34px">
<td class="k y l">BHA</td>
<td class="k y">13.4</td>
<td class="k p">15.4</td>
<td class="k c">11.4</td>
<td class="r">1.0</td>
<td class="r">12.6</td>
<td class="r">0.9</td>
<td class="r">13.3</td>
<td class="y">1.9</td>
<td class="y">13.4</td>
<td class="k"></td>
<td class="k y">13.4</td>
<td class="k y">4.1</td>
<td class="k y">20.9</td>
<td class="k y">280,210</td>
<td class="p">15.4</td>
<td class="p">0.1</td>
<td></td>
<td></td>
<td></td>
<td></td>
<td class="k g">13.5</td>
<td class="k y">13.4</td>
<td class="k y">13.4</td>
<td></td>
<td></td>
</tr>
<tr style="height:33px">
<td class="k y l">BHC</td>
<td class="k y">1.7</td>
<td class="k p">1.9</td>
<td class="k c">1.5</td>
<td class="c">0.2</td>
<td class="c">1.5</td>
<td class="r">0.1</td>
<td class="r">1.6</td>
<td class="y">0.1</td>
<td class="y">1.7</td>
<td class="k"></td>
<td class="k"></td>
<td class="k"></td>
<td class="k"></td>
<td class="k"></td>
<td class="g">1.8</td>
<td class="g">0.6</td>
<td></td>
<td></td>
<td></td>
<td></td>
<td class="k"></td>
<td class="k"></td>
<td class="k"></td>
<td></td>
<td></td>
</tr>
<tr style="height:34px">
<td class="k y l">BHG</td>
<td class="k y">13.5</td>
<td class="k p">18.9</td>
<td class="k c">8.1</td>
<td></td>
<td></td>
<td></td>
<td></td>
<td></td>
<td></td>
<td class="k"></td>
<td class="k"></td>
<td class="k"></td>
<td class="k"></td>
<td class="k"></td>
<td></td>
<td></td>
<td></td>
<td></td>
<td></td>
<td></td>
<td class="k"></td>
<td class="k"></td>
<td class="k"></td>
<td></td>
<td></td>
</tr>
<tr style="height:33px">
<td class="k y l">BHI</td>
<td class="k y">15.0</td>
<td class="k p">17.2</td>
<td class="k c">12.8</td>
<td></td>
<td></td>
<td></td>
<td></td>
<td></td>
<td></td>
<td class="k r">-0.5</td>
<td class="k r">14.5</td>
<td class="k r">0.2</td>
<td class="k y">1.0</td>
<td class="k y">14,750</td>
<td class="g">16.0</td>
<td class="g">0.5</td>
<td class="g">17.0</td>
<td class="g">0.5</td>
<td class="g">17.1</td>
<td class="g">0.3</td>
<td class="k y">15.0</td>
<td class="k r">14.5</td>
<td class="k r">14.8</td>
<td></td>
<td></td>
</tr>
<tr style="height:34px">
<td class="k y l">BHK</td>
<td class="k y">9.9</td>
<td class="k p">11.3</td>
<td class="k c">8.5</td>
<td></td>
<td></td>
<td></td>
<td></td>
<td></td>
<td></td>
<td class="k"></td>
<td class="k"></td>
<td class="k"></td>
<td class="k"></td>
<td class="k"></td>
<td class="p">11.3</td>
<td class="p">0.1</td>
<td></td>
<td></td>
<td></td>
<td></td>
<td class="k"></td>
<td class="k"></td>
<td class="k"></td>
<td></td>
<td></td>
</tr>
<tr style="height:33px">
<td class="k y l">BHP</td>
<td class="k y">6.7</td>
<td class="k p">7.7</td>
<td class="k c">5.7</td>
<td class="r">1.0</td>
<td class="r">6.5</td>
<td class="r">0.1</td>
<td class="r">6.6</td>
<td class="g">0.1</td>
<td class="g">7.0</td>
<td class="k"></td>
<td class="k"></td>
<td class="k"></td>
<td class="k"></td>
<td class="k"></td>
<td class="g">7.2</td>
<td class="g">0.1</td>
<td class="g">7.5</td>
<td class="g">0.5</td>
<td></td>
<td></td>
<td class="k"></td>
<td class="k"></td>
<td class="k"></td>
<td></td>
<td></td>
</tr>
<tr style="height:34px">
<td class="k y l"></td>
<td class="k y"></td>
<td class="k p"></td>
<td class="k c"></td>
<td></td>
<td></td>
<td></td>
<td></td>
<td></td>
<td></td>
<td class="k"></td>
<td class="k"></td>
<td class="k"></td>
<td class="k"></td>
<td class="k"></td>
<td></td>
<td></td>
<td></td>
<td></td>
<td></td>
<td></td>
<td class="k"></td>
<td class="k"></td>
<td class="k"></td>
<td></td>
<td></td>
</tr>
</tbody></table></div>
</body></html>
